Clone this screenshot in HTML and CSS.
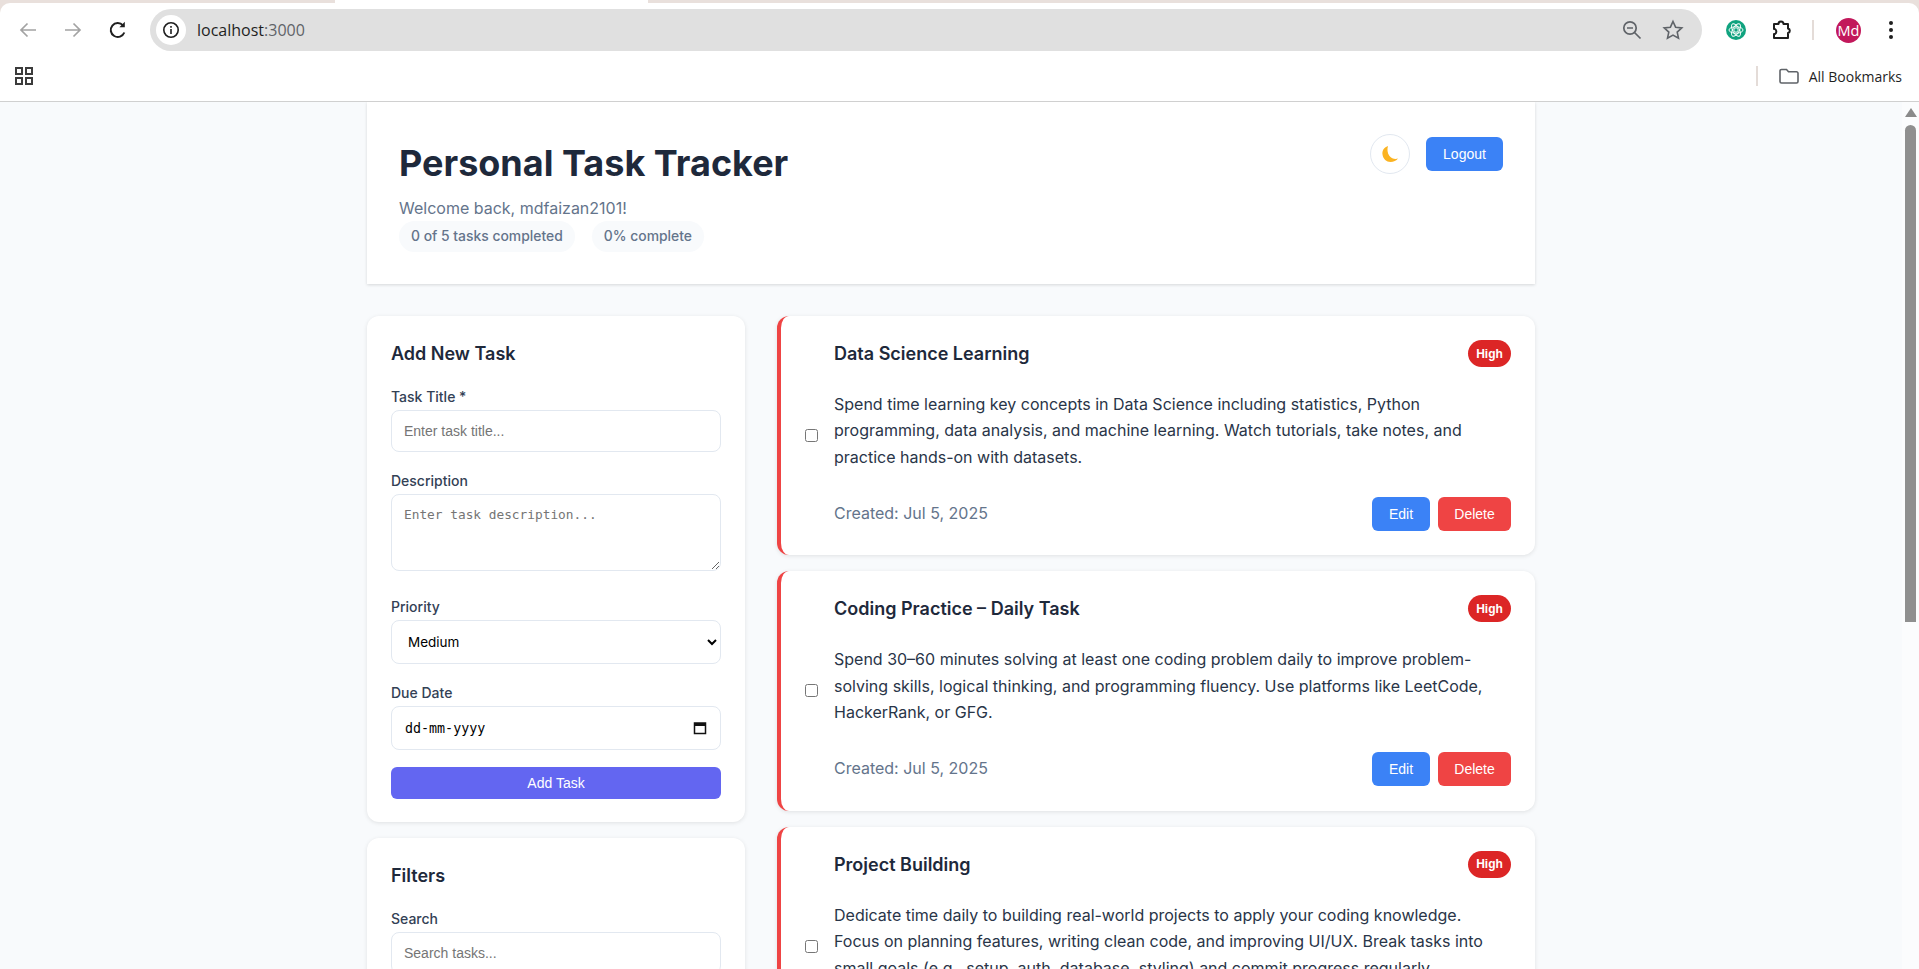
FILE: index.html
```html
<!DOCTYPE html>
<html lang="en">
<head>
<meta charset="utf-8">
<title>Personal Task Tracker</title>
<link rel="stylesheet" href="styles.css">
</head>
<body>
<div class="browser">
  <div class="tabstrip"><div class="active-tab"></div></div>
  <div class="toolbar">
    <svg class="nav nav-back" width="24" height="24" viewBox="0 0 24 24" fill="none" stroke="#a3a3a3" stroke-width="1.7"><path d="M20 12H5M11.5 5.5 5 12l6.500 6.500"/></svg>
    <svg class="nav nav-fwd" width="24" height="24" viewBox="0 0 24 24" fill="none" stroke="#a3a3a3" stroke-width="1.7"><path d="M4 12h15M12.500 5.500 19 12l-6.500 6.500"/></svg>
    <svg class="nav nav-reload" width="24" height="24" viewBox="0 0 24 24" fill="none" stroke="#1f1f1f" stroke-width="2"><path d="M18.300 14.500A7 7 0 1 1 17 7.300"/><path d="M18.800 3.800v5.400h-5.400z" fill="#1f1f1f" stroke="none"/></svg>
    <div class="omnibox">
      <span class="site-info"><svg width="18" height="18" viewBox="0 0 18 18" fill="none" stroke="#1f1f1f" stroke-width="1.6"><circle cx="9" cy="9" r="7.200"/><path d="M9 8v5M9 5v1.700"/></svg></span>
      <span class="url">localhost<span class="url-port">:3000</span></span>
      <svg class="omni-zoom" width="22" height="22" viewBox="0 0 22 22" fill="none" stroke="#5f6368" stroke-width="1.700"><circle cx="9" cy="9" r="6.200"/><path d="M6 9h6M13.500 13.500l6 6"/></svg>
      <svg class="omni-star" width="22" height="22" viewBox="0 0 22 22" fill="none" stroke="#5f6368" stroke-width="1.600"><path d="M11 2.500l2.600 5.700 6.200.7-4.600 4.200 1.300 6.100-5.500-3.100-5.500 3.100 1.300-6.100-4.600-4.200 6.200-.7z"/></svg>
    </div>
    <svg class="ext-gpt" width="20" height="20" viewBox="0 0 20 20" fill="none"><circle cx="10" cy="10" r="10" fill="#10a37f"/><g stroke="#fff" stroke-width=".9" fill="none"><ellipse cx="10" cy="10" rx="7" ry="3.300"/><ellipse cx="10" cy="10" rx="7" ry="3.300" transform="rotate(60 10 10)"/><ellipse cx="10" cy="10" rx="7" ry="3.300" transform="rotate(120 10 10)"/><circle cx="10" cy="10" r="2.200"/></g></svg>
    <svg class="ext-puzzle" width="22" height="22" viewBox="0 0 22 22" fill="none" stroke="#1f1f1f" stroke-width="2" stroke-linejoin="round"><path d="M3 5h4.500a2.500 2.500 0 0 1 5 0H17v4.500a2.300 2.300 0 0 1 0 4.500V19H3v-4h1a3 3 0 0 0 0-5H3z"/></svg>
    <span class="tool-sep"></span>
    <span class="avatar">Md</span>
    <svg class="kebab" width="6" height="20" viewBox="0 0 6 20" fill="#1f1f1f"><circle cx="3" cy="3" r="2"/><circle cx="3" cy="10" r="2"/><circle cx="3" cy="17" r="2"/></svg>
  </div>
  <div class="bookmarks">
    <svg class="apps" width="18" height="18" viewBox="0 0 18 18" fill="none" stroke="#3c3c3c" stroke-width="2"><rect x="1" y="1" width="6" height="6"/><rect x="11" y="1" width="6" height="6"/><rect x="1" y="11" width="6" height="6"/><rect x="11" y="11" width="6" height="6"/></svg>
    <span class="bm-sep"></span>
    <svg class="bm-folder" width="20" height="16" viewBox="0 0 20 16" fill="none" stroke="#5f6368" stroke-width="1.600"><path d="M1 3a1.500 1.500 0 0 1 1.500-1.500h5l2 2.300h8A1.500 1.500 0 0 1 19 5.300v8.200a1.500 1.500 0 0 1-1.500 1.500h-15A1.500 1.500 0 0 1 1 13.500z"/></svg>
    <span class="bm-label">All Bookmarks</span>
  </div>
</div>

<div class="viewport">
  <div class="page">
    <div class="container">
      <header class="app-header">
        <div class="header-text">
          <h1>Personal Task Tracker</h1>
          <p class="welcome">Welcome back, mdfaizan2101!</p>
          <div class="pills">
            <span class="pill">0 of 5 tasks completed</span>
            <span class="pill">0% complete</span>
          </div>
        </div>
        <div class="header-actions">
          <button class="theme-btn" aria-label="Toggle theme"><svg width="18" height="18" viewBox="0 0 18 18"><path d="M7 1C2.500 2.500 1 6 1.500 9.500 2 14 5.500 17 9.500 17c3 0 6-1.500 7.500-3.500-3 1-6.500 0-8.500-2.500C6.300 8.200 6 4 7 1z" fill="#fbb321"/></svg></button>
          <button class="btn btn-blue btn-logout">Logout</button>
        </div>
      </header>

      <div class="columns">
        <aside class="sidebar">
          <section class="panel">
            <h2>Add New Task</h2>
            <div class="field"><label>Task Title *</label><input class="control ctl-text" type="text" placeholder="Enter task title..."></div>
            <div class="field"><label>Description</label><textarea class="control ctl-area" placeholder="Enter task description..."></textarea></div>
            <div class="field"><label>Priority</label><select class="control ctl-select"><option>Medium</option></select></div>
            <div class="field"><label>Due Date</label>
              <div class="control ctl-date"><span class="date-text">dd-mm-yyyy</span>
                <svg width="14" height="14" viewBox="0 0 14 14" fill="none" stroke="#111" stroke-width="1.500"><rect x="1.500" y="2" width="11" height="10.500"/><path d="M1.500 3.500h11" stroke-width="3"/></svg>
              </div>
            </div>
            <button class="btn-add">Add Task</button>
          </section>
          <section class="panel">
            <h2>Filters</h2>
            <div class="field"><label>Search</label><input class="control ctl-text" type="text" placeholder="Search tasks..."></div>
          </section>
        </aside>

        <main class="tasks">
          <article class="task">
            <input class="task-check" type="checkbox">
            <div class="task-body">
              <div class="task-head"><h3>Data Science Learning</h3><span class="badge">High</span></div>
              <p class="task-desc">Spend time learning key concepts in Data Science including statistics, Python programming, data analysis, and machine learning. Watch tutorials, take notes, and practice hands-on with datasets.</p>
              <div class="task-foot"><span class="created">Created: Jul 5, 2025</span><div class="task-btns"><button class="btn btn-blue btn-edit">Edit</button><button class="btn btn-red btn-delete">Delete</button></div></div>
            </div>
          </article>
          <article class="task">
            <input class="task-check" type="checkbox">
            <div class="task-body">
              <div class="task-head"><h3>Coding Practice – Daily Task</h3><span class="badge">High</span></div>
              <p class="task-desc">Spend 30–60 minutes solving at least one coding problem daily to improve problem-solving skills, logical thinking, and programming fluency. Use platforms like LeetCode, HackerRank, or GFG.</p>
              <div class="task-foot"><span class="created">Created: Jul 5, 2025</span><div class="task-btns"><button class="btn btn-blue btn-edit">Edit</button><button class="btn btn-red btn-delete">Delete</button></div></div>
            </div>
          </article>
          <article class="task">
            <input class="task-check" type="checkbox">
            <div class="task-body">
              <div class="task-head"><h3>Project Building</h3><span class="badge">High</span></div>
              <p class="task-desc">Dedicate time daily to building real-world projects to apply your coding knowledge. Focus on planning features, writing clean code, and improving UI/UX. Break tasks into small goals (e.g., setup, auth, database, styling) and commit progress regularly.</p>
              <div class="task-foot"><span class="created">Created: Jul 5, 2025</span><div class="task-btns"><button class="btn btn-blue btn-edit">Edit</button><button class="btn btn-red btn-delete">Delete</button></div></div>
            </div>
          </article>
        </main>
      </div>
    </div>
  </div>
  <div class="scrollbar"><span class="sb-arrow"></span><span class="sb-thumb"></span></div>
</div>
</body>
</html>
```
FILE: styles.css
```css
* { box-sizing: border-box; }
html, body { margin: 0; height: 100%; overflow: hidden; }
body { display: flex; flex-direction: column; background: #f8fafc; font-family: Inter, sans-serif; color: #1e293b; }

/* browser chrome */
.browser { flex: none; height: 102px; background: #e9e0dc; border-bottom: 1px solid #d0d0d0; display: flex; flex-direction: column; }
.tabstrip { flex: none; height: 3px; }
.active-tab { width: 313px; height: 3px; margin-left: 335px; background: #fff; }
.toolbar { flex: none; height: 54px; background: #fff; border-radius: 10px 10px 0 0; display: flex; align-items: center; }
.nav { flex: none; }
.nav-back { margin-left: 16px; }
.nav-fwd { margin-left: 21px; }
.nav-reload { margin-left: 21px; }
.omnibox { flex: none; width: 1552px; height: 42px; margin-left: 20px; background: #e0e0e0; border-radius: 21px; display: flex; align-items: center; }
.site-info { flex: none; width: 30px; height: 30px; margin-left: 6px; background: #fff; border-radius: 50%; display: flex; align-items: center; justify-content: center; }
.url { margin-left: 11px; flex: 1; font-family: "Open Sans", sans-serif; font-size: 16px; color: #1f1f1f; }
.url-port { color: #5f6368; }
.omni-zoom { flex: none; margin-right: 19px; }
.omni-star { flex: none; margin-right: 18px; }
.ext-gpt { flex: none; margin-left: 24px; }
.ext-puzzle { flex: none; margin-left: 25px; }
.tool-sep { flex: none; width: 2px; height: 20px; margin-left: 19px; background: #e4dcd8; }
.avatar { flex: none; width: 25px; height: 25px; margin-left: 22px; border-radius: 50%; background: #c2185b; color: #fff; font-family: "Open Sans", sans-serif; font-size: 14.500px; display: flex; align-items: center; justify-content: center; }
.kebab { flex: none; margin-left: 27px; }
.bookmarks { flex: 1; background: #fff; display: flex; align-items: center; padding: 0 17px 6px 15px; }
.apps { flex: none; }
.bm-sep { flex: none; width: 2px; height: 20px; margin-left: auto; background: #e4dcd8; }
.bm-folder { flex: none; margin-left: 21px; }
.bm-label { margin-left: 10px; font-family: "Open Sans", sans-serif; font-size: 14px; color: #1f1f1f; }

/* viewport + scrollbar */
.viewport { flex: 1; min-height: 0; display: flex; }
.page { flex: 1; min-width: 0; overflow: hidden; }
.container { width: 1168px; margin-left: 367px; }
.scrollbar { flex: none; width: 17px; background: #fbfcfd; display: flex; flex-direction: column; align-items: center; }
.sb-arrow { flex: none; margin-top: 6px; width: 0; height: 0; border-left: 6px solid transparent; border-right: 6px solid transparent; border-bottom: 9px solid #8a8a8a; }
.sb-thumb { flex: none; width: 11px; height: 497px; margin-top: 8px; background: #8f8f8f; border-radius: 6px 6px 0 0; }

/* header */
.app-header { height: 182px; background: #fff; box-shadow: 0 1px 3px rgba(0,0,0,.14); padding: 32px 32px 0; display: flex; justify-content: space-between; }
.header-text { padding-top: 7px; }
h1 { margin: 0; font-size: 36px; line-height: 44px; font-weight: 700; color: #1e293b; }
.welcome { margin: 11px 0 0; font-size: 16px; line-height: 24px; color: #64748b; }
.pills { display: flex; gap: 17px; margin-top: 1px; }
.pill { padding: 0 12px; height: 31px; line-height: 31px; background: #f8fafc; border-radius: 16px; font-size: 13.900px; font-weight: 500; color: #64748b; }
.header-actions { display: flex; align-items: flex-start; gap: 16px; }
.theme-btn { width: 40px; height: 40px; padding: 0; background: #fff; border: 1px solid #e2e8f0; border-radius: 50%; display: flex; align-items: center; justify-content: center; }
.btn { height: 34px; padding: 0; border: 0; border-radius: 6px; color: #fff; font-family: "Liberation Sans", sans-serif; font-size: 14px; }
.btn-blue { background: #3b82f6; }
.btn-red { background: #ef4444; }
.btn-logout { width: 77px; margin-top: 3px; }
.btn-edit { width: 58px; }
.btn-delete { width: 73px; }

/* columns */
.columns { display: grid; grid-template-columns: 378px 758px; gap: 32px; margin-top: 32px; }
.sidebar { display: flex; flex-direction: column; gap: 16px; }
.panel { background: #fff; border-radius: 12px; box-shadow: 0 1px 4px rgba(0,0,0,.1); padding: 24px 24px 23px; }
h2 { margin: 0 0 20px; font-size: 18px; line-height: 28px; font-weight: 600; color: #1e293b; }
.field { margin-bottom: 20px; }
label { display: block; font-size: 14px; line-height: 18px; font-weight: 500; color: #334155; margin-bottom: 4px; }
.control { display: block; width: 100%; background: #fff; border: 1px solid #e2e8f0; border-radius: 8px; outline: 0; padding: 0 12px; color: #000; }
.ctl-text { height: 42px; font-family: "Liberation Sans", sans-serif; font-size: 14px; }
.ctl-area { height: 77px; margin-bottom: 27px; padding: 12px; font-family: "DejaVu Sans Mono", monospace; font-size: 12.800px; resize: vertical; }
.ctl-select { height: 44px; padding-right: 14px; font-family: Inter, sans-serif; font-size: 13.500px; }
.ctl-date { height: 44px; display: flex; align-items: center; justify-content: space-between; padding: 0 13px 0 13px; }
.date-text { font-family: "DejaVu Sans Mono", monospace; font-size: 13.330px; }
.btn-add { display: block; width: 100%; height: 32px; margin-top: -3px; border: 0; border-radius: 6px; background: #6366f1; color: #fff; font-family: "Liberation Sans", sans-serif; font-size: 14px; }

/* tasks */
.tasks { display: flex; flex-direction: column; gap: 16px; }
.task { background: #fff; border-left: 4px solid #ef4444; border-radius: 12px; box-shadow: 0 1px 4px rgba(0,0,0,.1); padding: 24px 24px 24.400px; display: flex; align-items: center; gap: 16px; }
.task-check { flex: none; margin: 0; width: 13px; height: 13px; }
.task-body { flex: 1; min-width: 0; }
.task-head { display: flex; justify-content: space-between; align-items: center; height: 27px; }
h3 { margin: 0; font-size: 18px; font-weight: 600; color: #1e293b; }
.badge { width: 43px; height: 27px; border-radius: 14px; background: #dc2626; color: #fff; font-family: "Liberation Sans", sans-serif; font-size: 12px; font-weight: 700; display: flex; align-items: center; justify-content: center; }
.task-desc { margin: 24px 0 0; font-size: 16px; line-height: 26.400px; color: #293548; }
.task-foot { margin-top: 26.800px; display: flex; justify-content: space-between; align-items: center; }
.created { font-size: 16px; padding-bottom: 2px; color: #64748b; }
.task-btns { display: flex; gap: 8px; }
```
